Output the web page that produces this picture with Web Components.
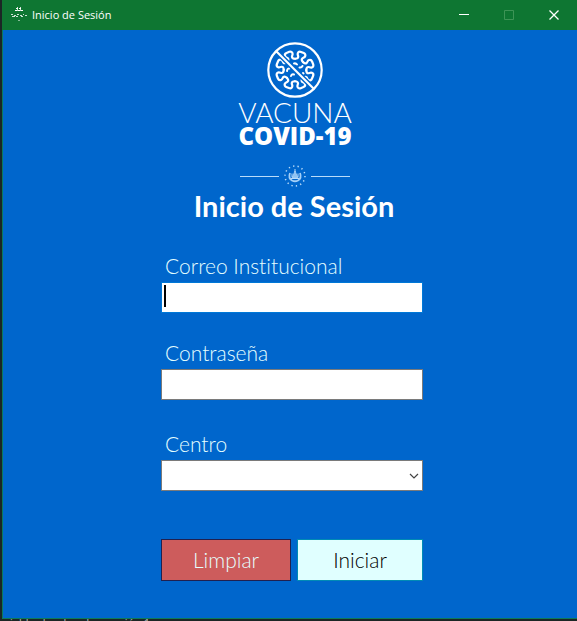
<!DOCTYPE html>
<html lang="es">
<head>
<meta charset="utf-8">
<meta name="viewport" content="width=device-width, initial-scale=1">
<title>Inicio de Sesión</title>
<style>
html, body { margin: 0; height: 100%; }
body { background: #1b2725; font-family: Lato, "Open Sans", sans-serif; font-variant-ligatures: none; }
</style>
</head>
<body>
<login-window></login-window>

<template id="t-window">
<style>
:host { display: flex; flex-direction: column; min-height: 100vh; }
main { flex: 1; box-sizing: border-box; margin-left: 2px; border: solid #0c7a5a; border-width: 0 0 1px 1px; background: #0066cc; display: flex; flex-direction: column; align-items: center; padding: 12px 12px 0 16px; }
.bar { margin-left: 2px; }
.form { width: 100%; max-width: 262px; }
h1 { margin: 0 0 0 4px; text-align: center; white-space: nowrap; color: #fff; font-size: 29px; line-height: 36px; font-weight: 700; }
form { margin: 0; padding-top: 28px; }
.fields { display: grid; gap: 26px; }
.actions { display: grid; grid-template-columns: 130fr 126fr; gap: 6px; margin-top: 48px; }
</style>
<title-bar class="bar">Inicio de Sesión</title-bar>
<main>
  <div class="form">
    <vaccine-logo></vaccine-logo>
    <h1>Inicio de Sesión</h1>
    <form>
      <div class="fields">
        <form-field label="Correo Institucional" kind="email" active></form-field>
        <form-field label="Contraseña" kind="password"></form-field>
        <form-field label="Centro" kind="select" style="padding-top:4px"></form-field>
      </div>
      <div class="actions">
        <action-button class="clear">Limpiar</action-button>
        <action-button primary>Iniciar</action-button>
      </div>
    </form>
  </div>
</main>
<status-strip>variables locales &nbsp; Inspección 1</status-strip>
</template>

<template id="t-bar">
<style>
:host { display: flex; align-items: center; height: 30px; background: #0e7632; color: #fff; font: 12px/16px "Open Sans", "Noto Sans", sans-serif; }
.icon { margin: 0 4px 4px 8px; flex: none; }
.name { flex: 1; white-space: nowrap; font-size: 11px; }
button { width: 45px; height: 30px; padding: 0; border: 0; background: none; color: #fff; display: grid; place-items: center; }
button:disabled { color: #3d9456; }
svg { display: block; }
</style>
<svg class="icon" width="18" height="16" viewBox="0 0 18 16" fill="none" stroke="#fff">
  <path d="M6 3.500h6M5 5.500h8" stroke-dasharray="2 1"/>
  <path d="M7.500 2v4M10.500 2v4" opacity=".8"/>
  <path d="M1 9.500h2M4 10.500h2M7 9.500h2M10 10.500h2M13 9.500h1M15 10.500h2M2 11.500h3M6 11.500h2M11 11.500h2" opacity=".8"/>
  <path d="M8 15.500h2" opacity=".5"/>
</svg>
<span class="name"><slot></slot></span>
<button type="button" aria-label="Minimizar"><svg width="11" height="11"><path d="M0 4.500h10" stroke="currentColor"/></svg></button>
<button type="button" aria-label="Maximizar" disabled><svg width="11" height="11"><path d="M.5.5h9v9h-9z" fill="none" stroke="currentColor"/></svg></button>
<button type="button" aria-label="Cerrar"><svg width="11" height="11"><path d="M.5.5l9 9M9.500.5l-9 9" stroke="currentColor" stroke-width="1.300"/></svg></button>
</template>

<template id="t-logo">
<style>
:host { display: flex; flex-direction: column; align-items: center; margin-left: 6px; color: #fff; white-space: nowrap; }
svg { display: block; }
.thin { font-size: 28px; line-height: 28px; font-weight: 300; }
.heavy { font: 800 24px/20px "Open Sans", Lato, sans-serif; margin-bottom: 18px; }
</style>
<svg width="56" height="56" viewBox="-28 -28 56 56" fill="none" stroke="#fff" stroke-linecap="round" stroke-linejoin="round">
  <defs>
    <path id="spike" d="M-4.300-10.400C-2.600-11.200-1.700-12.200-2.200-13.500C-2.600-14.500-4-15-4-16.600C-4-18.200-2.800-19-1.500-19H1.500C2.800-19 4-18.200 4-16.600C4-15 2.600-14.500 2.200-13.500C1.700-12.200 2.600-11.200 4.300-10.400"/>
  </defs>
  <g stroke-width="2.200" transform="rotate(-22)">
    <use href="#spike"/><use href="#spike" transform="rotate(45)"/><use href="#spike" transform="rotate(90)"/><use href="#spike" transform="rotate(135)"/>
    <use href="#spike" transform="rotate(180)"/><use href="#spike" transform="rotate(225)"/><use href="#spike" transform="rotate(270)"/><use href="#spike" transform="rotate(315)"/>
  </g>
  <path d="M-1-6.500q2-.5 3 1M4.500-2.500q2 .5 3-1.500M-8 1q.5-3 2.500-2.500M-4 6q1-2.500 3-1.500M8 3l.5.500" stroke-width="2"/>
  <path d="M-18-18L18 18" stroke="#0066cc" stroke-width="5" stroke-linecap="butt"/>
  <path d="M-18.500-18.500l37 37" stroke-width="2.200"/>
  <circle r="26.700" stroke-width="2.200"/>
</svg>
<span class="thin">VACUNA</span>
<span class="heavy">COVID-19</span>
<svg width="112" height="24" viewBox="-56 -12 112 24" fill="none" stroke="#fff">
  <path d="M-55 .5h39M16 .5h39" stroke="#b9dcfa"/>
  <circle r="10" stroke="#b9dcfa" stroke-width="1.500" stroke-dasharray="1.300 3.188"/>
  <path d="M-5-3Q-7 2-3 4.500Q0 6 3 4.500Q7 2 5-3" stroke="#a5d0f7" stroke-width="1.800"/>
  <path d="M0-5L3 2H-3Z" fill="#8fc3f3" stroke="#a5d0f7" stroke-width=".8"/>
  <path d="M-4 2.500H4M-3-2.500V1M3-2.500V1M0-7v3" stroke="#b9dcfa"/>
</svg>
</template>

<template id="t-field">
<style>
:host { display: block; }
label { display: block; padding: 2px 0 4px 4px; color: #e6ffff; font-size: 21px; line-height: 24px; font-weight: 300; }
.box { position: relative; }
input, select { display: block; box-sizing: border-box; width: 100%; height: 31px; margin: 0; padding: 2px 4px; border: 1px solid #7a7a7a; border-radius: 0; background: #fff; color: #000; font: 300 20px/24px Lato, sans-serif; outline: 0; appearance: none; }
:host([active]) input { border-color: #0078d7; }
.caret { position: absolute; left: 3px; top: 3px; width: 2px; height: 22px; background: #000; }
.arrow { position: absolute; right: 4px; top: 13px; pointer-events: none; }
</style>
<label for="control"></label>
<div class="box"></div>
</template>

<template id="t-button">
<style>
:host { display: block; }
button { display: block; width: 100%; height: 42px; padding: 0; border: 1px solid #202050; border-radius: 0; background: #cd5c5c; color: #e6ffff; font: 300 21px/24px Lato, sans-serif; }
:host([primary]) button { background: #e0ffff; color: #000; border-color: #008bb5; }
</style>
<button type="button"><slot></slot></button>
</template>

<template id="t-strip">
<style>
:host { display: block; height: 2px; overflow: hidden; background: #1b2725; color: #b5bdbb; font: 11px/8px "Open Sans", sans-serif; text-indent: -6px; white-space: nowrap; }
</style>
<slot></slot>
</template>

<script>
function define(name, templateId, setup) {
  customElements.define(name, class extends HTMLElement {
    constructor() {
      super();
      this.attachShadow({ mode: 'open' }).append(document.getElementById(templateId).content.cloneNode(true));
    }
    connectedCallback() {
      if (setup && !this.ready) { this.ready = true; setup(this); }
    }
  });
}
define('title-bar', 't-bar');
define('vaccine-logo', 't-logo');
define('form-field', 't-field', host => {
  const root = host.shadowRoot;
  const kind = host.getAttribute('kind');
  const box = root.querySelector('.box');
  root.querySelector('label').textContent = host.getAttribute('label');
  const control = document.createElement(kind === 'select' ? 'select' : 'input');
  control.id = 'control';
  if (kind !== 'select') control.type = kind;
  box.append(control);
  if (kind === 'select') {
    box.insertAdjacentHTML('beforeend', '<svg class="arrow" width="10" height="6"><path d="M1 1l4 4 4-4" fill="none" stroke="#444" stroke-width="1.200"/></svg>');
  }
  if (host.hasAttribute('active')) {
    box.insertAdjacentHTML('beforeend', '<span class="caret"></span>');
  }
});
define('action-button', 't-button');
define('status-strip', 't-strip');
define('login-window', 't-window');
</script>
</body>
</html>
